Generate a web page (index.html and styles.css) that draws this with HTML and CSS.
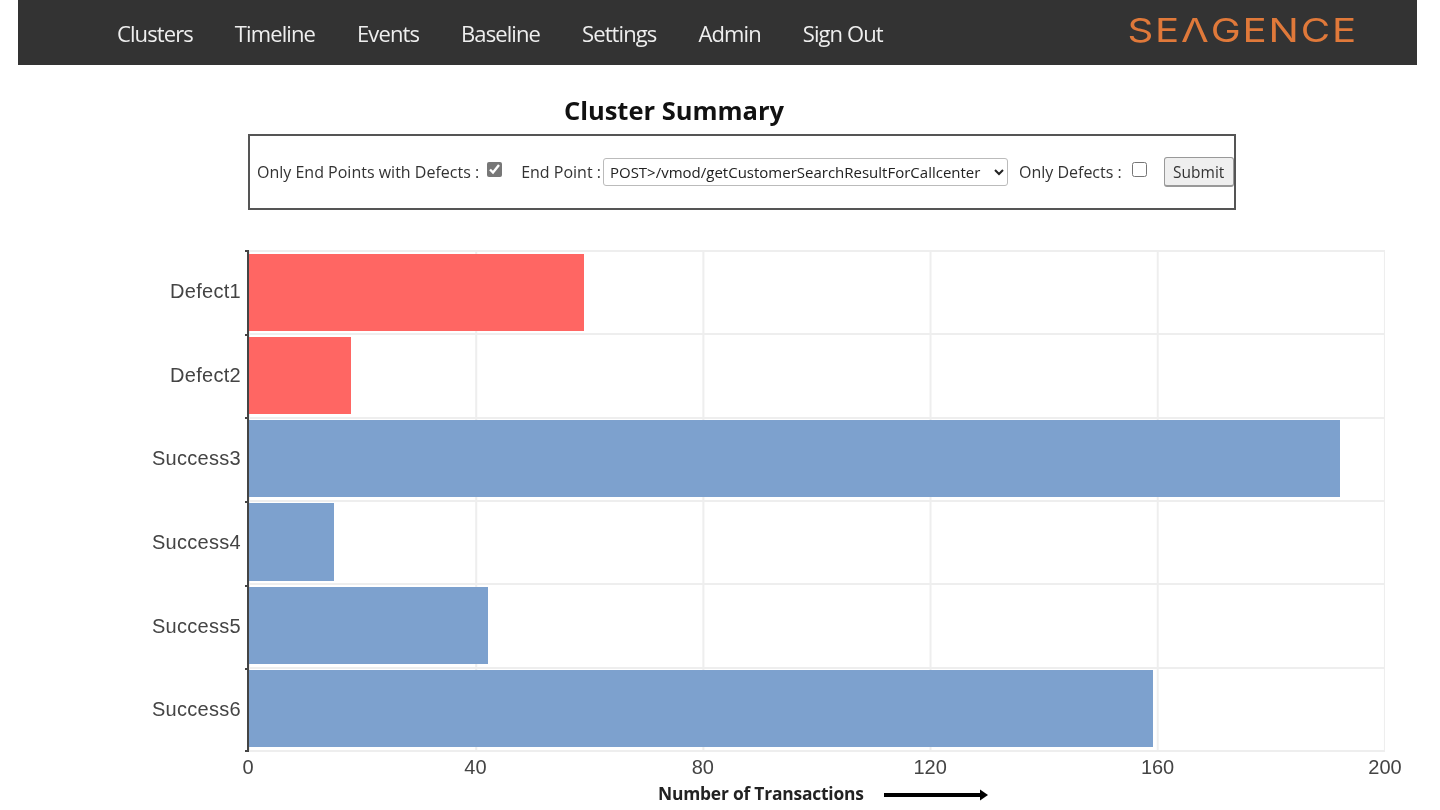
FILE: index.html
```html
<!DOCTYPE html>
<html lang="en">
<head>
  <meta charset="UTF-8">
  <meta name="viewport" content="width=device-width, initial-scale=1.0">
  <title>Cluster Summary</title>
  <link rel="stylesheet" href="styles.css">
</head>
<body>

<header class="topbar">
  <nav class="nav">
    <a href="#">Clusters</a>
    <a href="#">Timeline</a>
    <a href="#">Events</a>
    <a href="#">Baseline</a>
    <a href="#">Settings</a>
    <a href="#">Admin</a>
    <a href="#">Sign Out</a>
  </nav>
  <div class="logo">SEΛGENCE</div>
</header>

<h2 class="title">Cluster Summary</h2>

<form class="filters">
  <label class="filter">Only End Points with Defects :<input type="checkbox" class="check" checked></label>
  <label class="filter">End Point :<select class="endpoint">
      <option>POST&gt;/vmod/getCustomerSearchResultForCallcenter</option>
    </select></label>
  <label class="filter">Only Defects :<input type="checkbox" class="check"></label>
  <button type="button" class="submit">Submit</button>
</form>

<section class="chart">
  <div class="labels">
    <div class="label">Defect1</div>
    <div class="label">Defect2</div>
    <div class="label">Success3</div>
    <div class="label">Success4</div>
    <div class="label">Success5</div>
    <div class="label">Success6</div>
  </div>
  <div class="plot">
    <div class="row"><div class="bar defect" style="width: 29.5%"></div></div>
    <div class="row"><div class="bar defect" style="width: 9%"></div></div>
    <div class="row"><div class="bar success" style="width: 96%"></div></div>
    <div class="row"><div class="bar success" style="width: 7.5%"></div></div>
    <div class="row"><div class="bar success" style="width: 21%"></div></div>
    <div class="row"><div class="bar success" style="width: 79.6%"></div></div>
  </div>
  <div class="ticks">
    <span>0</span>
    <span>40</span>
    <span>80</span>
    <span>120</span>
    <span>160</span>
    <span>200</span>
  </div>
</section>

<div class="axis-title">
  <span>Number of Transactions</span>
  <svg class="arrow" width="104" height="12" viewBox="0 0 104 12">
    <rect x="0" y="4" width="97" height="4" fill="#000"/>
    <polygon points="96,0.5 104,6 96,11.5" fill="#000"/>
  </svg>
</div>

</body>
</html>
```

FILE: styles.css
```css
body {
    font-family: 'Open Sans', 'Noto Sans', sans-serif;
    margin: 0;
    background-color: #ffffff;
    color: #333;
    overflow: hidden;
    filter: blur(0.45px);
}

.topbar {
    display: flex;
    justify-content: space-between;
    align-items: center;
    height: 65px;
    margin: 0 23px 0 18px;
    padding: 0 59px 0 99px;
    background-color: #333333;
}

.nav {
    display: flex;
    gap: 42px;
}

.nav a {
    color: #eeeeee;
    font-size: 22px;
    letter-spacing: -0.9px;
    text-decoration: none;
}

.logo {
    color: #e0793a;
    font-family: 'Inter', sans-serif;
    font-size: 33px;
    font-weight: 400;
    letter-spacing: 1.5px;
    line-height: 1;
    margin-bottom: 5px;
    transform: scaleX(1.22);
    transform-origin: right center;
}

.title {
    margin: 26px 0 0 0;
    padding-right: 92px;
    height: 43px;
    line-height: 38px;
    text-align: center;
    font-size: 25.5px;
    font-weight: 700;
    color: #111;
}

.filters {
    display: flex;
    align-items: center;
    box-sizing: border-box;
    width: 988px;
    height: 76px;
    margin-left: 248px;
    padding-left: 7px;
    border: 2px solid #555;
}

.filter {
    display: flex;
    align-items: center;
    gap: 4px;
    font-size: 16px;
    white-space: pre;
}

.filter:nth-child(2) {
    margin-left: 19px;
    gap: 2px;
}

.filter:nth-child(3) {
    margin-left: 11px;
}

.check {
    width: 15px;
    height: 15px;
    margin: 0 0 6px 4px;
    accent-color: #777;
}

.filter:nth-child(3) .check {
    margin-left: 6px;
}

.endpoint {
    box-sizing: border-box;
    width: 405px;
    height: 28px;
    padding: 0 2px;
    border: 1px solid #bbb;
    border-radius: 3px;
    background-color: #fff;
    color: #222;
    font-family: inherit;
    font-size: 15px;
}

.submit {
    box-sizing: border-box;
    width: 70px;
    height: 30px;
    margin-left: 17px;
    border: 1px solid #999;
    border-bottom-width: 2px;
    border-radius: 3px;
    background-color: #efefef;
    color: #333;
    font-family: inherit;
    font-size: 15.5px;
}

.chart {
    display: grid;
    grid-template-columns: 249px 1136px;
    grid-template-rows: 502px auto;
    margin-top: 40px;
}

.labels {
    display: flex;
    flex-direction: column;
    box-sizing: border-box;
    border-right: 2px solid #444;
}

.label {
    position: relative;
    flex: 1;
    display: flex;
    align-items: center;
    justify-content: flex-end;
    padding: 0 6px 1px 0;
    font-family: 'Liberation Sans', sans-serif;
    font-size: 20px;
    letter-spacing: 0.3px;
    color: #444;
}

/* tick marks sticking out of the y axis */
.label::before {
    content: '';
    position: absolute;
    top: 0;
    right: -2px;
    width: 4px;
    height: 2px;
    background-color: #444;
}

.label:last-child::after {
    content: '';
    position: absolute;
    bottom: 0;
    right: -2px;
    width: 4px;
    height: 2px;
    background-color: #444;
}

.plot {
    display: flex;
    flex-direction: column;
    box-sizing: border-box;
    border-top: 2px solid #eeeeee;
    background-image: linear-gradient(to left, #eeeeee 2px, transparent 2px);
    background-size: 20% 100%;
    background-position: 1px 0;
}

.row {
    flex: 1;
    display: flex;
    box-sizing: border-box;
    padding: 1.5px 0 2.5px 0;
    border-bottom: 2px solid #eeeeee;
}

.bar {
    height: 100%;
}

.defect {
    background-color: #ff6663;
}

.success {
    background-color: #7da1ce;
}

.ticks {
    grid-column: 2;
    display: flex;
    justify-content: space-between;
    height: 29px;
    margin-left: -1px;
    font-family: 'Liberation Sans', sans-serif;
    font-size: 20px;
    line-height: 30px;
    color: #444;
}

.ticks span {
    display: flex;
    justify-content: center;
    width: 0;
}

.axis-title {
    display: flex;
    align-items: center;
    gap: 20px;
    margin-left: 658px;
    font-size: 17.4px;
    font-weight: 700;
    letter-spacing: -0.2px;
    color: #222;
}

.arrow {
    margin-top: 3px;
}
```
